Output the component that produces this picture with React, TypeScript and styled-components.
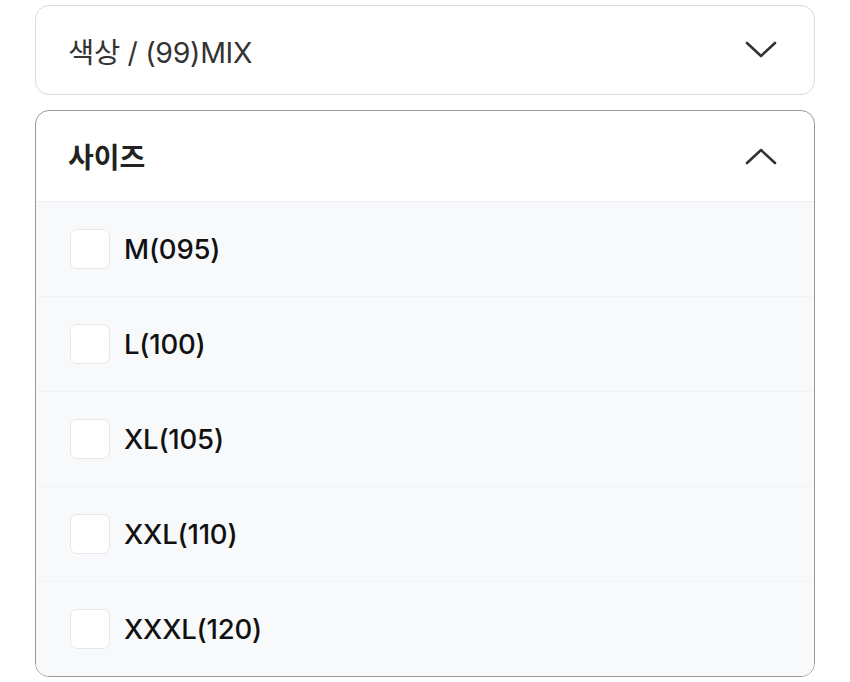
import React from 'react'
import styled, { createGlobalStyle } from 'styled-components';

const GlobalStyle = createGlobalStyle`
  body {
    margin: 0;
    background: #ffffff;
    font-family: Inter, "Noto Sans CJK KR", sans-serif;
  }
`;

const sizes = ['M(095)', 'L(100)', 'XL(105)', 'XXL(110)', 'XXXL(120)'];

const Chevron: React.FC<{ up?: boolean }> = ({ up }) => (
  <svg width="32" height="18" viewBox="0 0 32 18" fill="none">
    <path
      d={up ? 'M2 16 L16 3 L30 16' : 'M2 2 L16 15 L30 2'}
      stroke="#333"
      strokeWidth="2.6"
      strokeLinecap="round"
      strokeLinejoin="round"
    />
  </svg>
);

export default function App() {
  return (
    <>
      <GlobalStyle />
      <Page>
        <Select>
          <Header>
            <SelectText>색상 / (99)MIX</SelectText>
            <Chevron />
          </Header>
        </Select>

        <Select open>
          <Header open>
            <Title>사이즈</Title>
            <Chevron up />
          </Header>
          <List>
            {sizes.map((s) => (
              <Row key={s}>
                <Box />
                <Label>{s}</Label>
              </Row>
            ))}
          </List>
        </Select>
      </Page>
    </>
  );
}

const Page = styled.div`
  width: 780px;
  padding: 5px 35px 0;
  display: flex;
  flex-direction: column;
  gap: 15px;
`;

const Select = styled.div<{ open?: boolean }>`
  border: 1.5px solid ${(p) => (p.open ? '#9a9a9a' : '#dcdcdc')};
  border-radius: 14px;
  overflow: hidden;
  background: #fff;
`;

const Header = styled.div<{ open?: boolean }>`
  height: ${(p) => (p.open ? 90 : 88)}px;
  display: flex;
  align-items: center;
  justify-content: space-between;
  padding: 0 37px 0 32px;
`;

const SelectText = styled.span`
  font-size: 28.5px;
  color: #333;
  letter-spacing: -0.3px;
`;

const Title = styled.span`
  font-size: 28px;
  font-weight: 700;
  color: #222;
`;

const List = styled.div`
  background: #f8f9fb;
  border-top: 1.5px solid #eceef2;
`;

const Row = styled.div`
  height: 94px;
  display: flex;
  align-items: center;
  gap: 14px;
  padding-left: 34px;
  & + & {
    border-top: 1px solid #f2f3f6;
  }
`;

const Box = styled.div`
  width: 40px;
  height: 40px;
  border: 1.5px solid #e6e7ea;
  border-radius: 7px;
  background: #fff;
  box-sizing: border-box;
`;

const Label = styled.span`
  font-size: 27.5px;
  font-weight: 500;
  color: #111;
  letter-spacing: -0.2px;
`;
